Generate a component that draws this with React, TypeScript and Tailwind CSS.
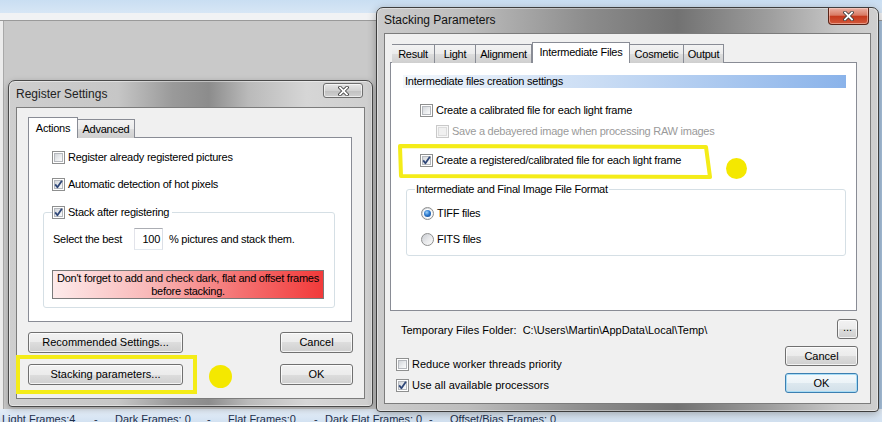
import React from "react";

const MS = "font-['Liberation_Sans',Arial,sans-serif] text-[11px] leading-[13px] tracking-[-0.25px]";
const SEG = "font-['Liberation_Sans',Arial,sans-serif] text-[11px] leading-[13px]";
const TITLE = "font-['Liberation_Sans',Arial,sans-serif] text-[12px] leading-[15px]";

function Check({ checked = false, disabled = false }: { checked?: boolean; disabled?: boolean }) {
  return (
    <span
      className={`flex h-[13px] w-[13px] shrink-0 items-center justify-center border ${
        disabled ? "border-[#c9c9c9] bg-[#f7f7f7]" : "border-[#8e8f8f] bg-white"
      }`}
    >
      <span
        className={`relative block h-[9px] w-[9px] border ${
          disabled
            ? "border-[#dcdcdc] bg-[#f0f0f0]"
            : "border-[#b5b8bd] bg-[linear-gradient(135deg,#d3d6da_0%,#eceef0_60%,#fbfbfb_100%)]"
        }`}
      >
        {checked && (
          <svg className="absolute -left-[2px] -top-[2px]" width="11" height="11" viewBox="0 0 11 11">
            <path d="M2.2 5.4 L4.4 8.2 L8.9 1.8" fill="none" stroke="#2f4778" strokeWidth="1.8" strokeLinejoin="round" />
          </svg>
        )}
      </span>
    </span>
  );
}

function Radio({ checked = false }: { checked?: boolean }) {
  return (
    <span className="flex h-[13px] w-[13px] shrink-0 items-center justify-center rounded-full border border-[#8e8f8f] bg-[linear-gradient(135deg,#c9ccd1_0%,#e9eaec_55%,#fbfbfb_100%)]">
      {checked && (
        <span className="flex h-[9px] w-[9px] items-center justify-center rounded-full bg-white">
          <span className="block h-[7px] w-[7px] rounded-full bg-[radial-gradient(circle_at_40%_35%,#9fd3fb_0%,#2e7bd0_45%,#0f3d7e_100%)]" />
        </span>
      )}
    </span>
  );
}

function Btn({
  children,
  className = "",
  focused = false,
}: {
  children: React.ReactNode;
  className?: string;
  focused?: boolean;
}) {
  return (
    <div
      className={`flex shrink-0 items-center justify-center rounded-[3px] border ${
        focused
          ? "border-[#3c7fb1] bg-[linear-gradient(180deg,#f4f9fc_0%,#ecf3f7_50%,#dde8ef_50%,#d2e0e9_100%)] shadow-[inset_0_0_0_1px_#a8dcf5]"
          : "border-[#707070] bg-[linear-gradient(180deg,#f2f2f2_0%,#ebebeb_50%,#dddddd_50%,#cfcfcf_100%)] shadow-[inset_0_0_0_1px_rgba(255,255,255,0.75)]"
      } ${SEG} text-black ${className}`}
    >
      {children}
    </div>
  );
}

function CloseX() {
  return (
    <svg width="11" height="10" viewBox="0 0 11 10">
      <path d="M2 1.5 L9 8.5 M9 1.5 L2 8.5" stroke="#3b3b3b" strokeWidth="3.4" strokeLinecap="square" />
      <path d="M2 1.5 L9 8.5 M9 1.5 L2 8.5" stroke="#ffffff" strokeWidth="1.8" strokeLinecap="square" />
    </svg>
  );
}

function Row({ children, className = "" }: { children: React.ReactNode; className?: string }) {
  return <div className={`flex items-center ${className}`}>{children}</div>;
}

const TAB_OFF =
  "flex h-[19px] items-start justify-center border border-b-0 border-l-0 border-[#898c95] bg-[linear-gradient(180deg,#f3f3f3_0%,#ebebeb_50%,#dddddd_51%,#cfcfcf_100%)] pt-[3px]";

export default function App() {
  return (
    <div className="relative h-[422px] w-[882px] overflow-hidden bg-[#c9c9c9]">
      {/* desktop / main app background */}
      <div className="flex h-full flex-col">
        <div className="h-[13px] bg-[linear-gradient(180deg,#c9def2_0%,#d7e6f5_100%)]" />
        <div className="h-[8px] border-b border-[#9a9a9a] bg-[#f1f2f4]" />
        <div className="flex flex-1">
          <div className="w-[4px] border-r border-[#a9a9a9] bg-[#ececec]" />
          <div className="flex-1 bg-[#c9c9c9]" />
          <div className="w-[3px] bg-[#a9c3de]" />
        </div>
        <div className="flex h-[13px] items-start bg-[linear-gradient(180deg,#e4edf7_0%,#d3e2f2_100%)] pl-[2px] pt-[4px] font-['Liberation_Sans',Arial,sans-serif] text-[11px] leading-[13px] text-[#1d2f4b]">
          <span className="w-[92px] shrink-0">Light Frames:4</span>
          <span className="w-[21px] shrink-0">-</span>
          <span className="w-[92px] shrink-0">Dark Frames: 0</span>
          <span className="w-[21px] shrink-0">-</span>
          <span className="w-[86px] shrink-0">Flat Frames:0</span>
          <span className="w-[11px] shrink-0">-</span>
          <span className="w-[104px] shrink-0">Dark Flat Frames: 0</span>
          <span className="w-[21px] shrink-0">-</span>
          <span className="shrink-0">Offset/Bias Frames: 0</span>
        </div>
      </div>

      {/* Register Settings window */}
      <div className="absolute left-[8px] top-[80px] flex h-[327px] w-[365px] flex-col rounded-t-[7px] rounded-b-[4px] border border-[#4a4a4a] bg-[linear-gradient(90deg,#cfcfcf_0%,#c6c6c6_30%,#9a9a9a_45%,#8c8c8c_55%,#bababa_66%,#d6d6d6_82%,#cecece_100%)] px-[7px] pb-[7px] shadow-[inset_0_0_0_1px_rgba(255,255,255,0.45),0_2px_6px_rgba(0,0,0,0.25)]">
        <div className="flex h-[26px] shrink-0 items-start justify-between">
          <span className={`${TITLE} mt-[6px] text-[#222]`}>Register Settings</span>
          <div className="mr-[2px] mt-[2px] flex h-[15px] w-[40px] items-center justify-center rounded-[3px] border border-[#6e6e6e] bg-[linear-gradient(180deg,#e6e6e6_0%,#d2d2d2_50%,#c0c0c0_51%,#d0d0d0_100%)] shadow-[inset_0_0_0_1px_rgba(255,255,255,0.6)]">
            <CloseX />
          </div>
        </div>
        <div className="flex flex-1 flex-col border border-[#7c7c7c] bg-[#f0f0f0]">
          {/* tab control */}
          <div className="ml-[11px] mt-[9px] w-[324px]">
            <div className={`flex h-[21px] items-end ${MS}`}>
              <div className="relative z-10 flex h-[21px] w-[50px] items-start justify-center border border-b-0 border-[#898c95] bg-white pt-[4px]">
                Actions
              </div>
              <div className={`${TAB_OFF} h-[18px] w-[57px]`}>Advanced</div>
            </div>
            <div className={`-mt-px flex h-[185px] flex-col border border-[#898c95] bg-white ${MS}`}>
              <Row className="ml-[23px] mt-[13px] gap-[3px]">
                <Check />
                <span>Register already registered pictures</span>
              </Row>
              <Row className="ml-[23px] mt-[14px] gap-[3px]">
                <Check checked />
                <span>Automatic detection of hot pixels</span>
              </Row>
              <div className="ml-[14px] mt-[21px] flex h-[96px] w-[292px] flex-col rounded-[3px] border border-[#d5dfe5]">
                <Row className="-mt-[7px] ml-[8px] w-fit gap-[3px] bg-white pr-[3px]">
                  <Check checked />
                  <span>Stack after registering</span>
                </Row>
                <Row className="ml-[9px] mt-[9px]">
                  <span className="w-[81px] shrink-0">Select the best</span>
                  <div className="flex h-[22px] w-[29px] shrink-0 items-center justify-end border border-[#abadb3] border-b-[#e3e9ef] border-l-[#e2e3ea] border-r-[#dbdfe6] bg-white pr-[2px]">
                    100
                  </div>
                  <span className="ml-[6px]">% pictures and stack them.</span>
                </Row>
                <div className="ml-[8px] mt-[20px] flex h-[29px] w-[272px] flex-col items-center justify-center whitespace-nowrap border border-[#7a7a7a] bg-[linear-gradient(90deg,#fdeaea_0%,#f9b9b9_35%,#f47070_70%,#f23a3a_100%)] text-black">
                  <span>Don't forget to add and check dark, flat and offset frames</span>
                  <span>before stacking.</span>
                </div>
              </div>
            </div>
          </div>
          {/* buttons */}
          <div className="ml-[11px] mr-[11px] mt-[10px] flex justify-between">
            <Btn className="h-[21px] w-[155px]">Recommended Settings...</Btn>
            <Btn className="h-[21px] w-[73px]">Cancel</Btn>
          </div>
          <div className="ml-[11px] mr-[11px] mt-[11px] flex justify-between">
            <Btn className="h-[21px] w-[155px]">Stacking parameters...</Btn>
            <Btn className="h-[21px] w-[73px]">OK</Btn>
          </div>
        </div>
      </div>

      {/* Stacking Parameters window */}
      <div className="absolute left-[376px] top-[7px] flex h-[405px] w-[503px] flex-col rounded-t-[7px] rounded-b-[4px] border border-[#3e3e3e] bg-[linear-gradient(90deg,#cbcbcb_0%,#bdbdbd_18%,#8c8c8c_42%,#727272_60%,#9d9d9d_78%,#c6c6c6_92%,#cfcfcf_100%)] px-[7px] pb-[7px] shadow-[inset_0_0_0_1px_rgba(255,255,255,0.4),0_2px_8px_rgba(0,0,0,0.3)]">
        <div className="flex h-[25px] shrink-0 items-start justify-between">
          <span className={`${TITLE} mt-[5px] text-[#111]`}>Stacking Parameters</span>
          <div className="mr-[2px] flex h-[17px] w-[41px] items-center justify-center rounded-b-[4px] border border-t-0 border-[#5a2418] bg-[linear-gradient(180deg,#eab0a3_0%,#d97a64_45%,#c5391d_52%,#d2583b_100%)] shadow-[inset_0_0_0_1px_rgba(255,220,210,0.5)]">
            <CloseX />
          </div>
        </div>
        <div className="flex flex-1 flex-col border border-[#7c7c7c] bg-[#f0f0f0]">
          <div className="ml-[5px] mt-[8px] w-[467px]">
            <div className={`flex h-[21px] items-end pl-[2px] ${MS}`}>
              <div className={`${TAB_OFF} w-[43px] border-l`}>Result</div>
              <div className={`${TAB_OFF} w-[41px]`}>Light</div>
              <div className={`${TAB_OFF} w-[56px]`}>Alignment</div>
              <div className="relative z-10 flex h-[21px] w-[98px] items-start justify-center border border-b-0 border-[#898c95] bg-white pt-[3px]">
                Intermediate Files
              </div>
              <div className={`${TAB_OFF} w-[54px]`}>Cosmetic</div>
              <div className={`${TAB_OFF} w-[40px]`}>Output</div>
            </div>
            <div className={`-mt-px flex h-[249px] flex-col border border-[#898c95] bg-white ${MS}`}>
              <div className="ml-[12px] mt-[12px] flex h-[13px] w-[443px] items-center bg-[linear-gradient(90deg,#f3f7fc_0%,#c9dcf4_45%,#8ab3ea_100%)] pl-[2px]">
                Intermediate files creation settings
              </div>
              <Row className="ml-[29px] mt-[16px] gap-[3px]">
                <Check />
                <span>Create a calibrated file for each light frame</span>
              </Row>
              <Row className="ml-[45px] mt-[8px] gap-[3px] text-[#9a9a9a]">
                <Check disabled />
                <span>Save a debayered image when processing RAW images</span>
              </Row>
              <Row className="ml-[29px] mt-[16px] gap-[3px]">
                <Check checked />
                <span>Create a registered/calibrated file for each light frame</span>
              </Row>
              <div className="ml-[15px] mt-[22px] flex h-[67px] w-[440px] flex-col rounded-[3px] border border-[#d5dfe5]">
                <span className="-mt-[7px] ml-[8px] w-fit bg-white px-[1px]">Intermediate and Final Image File Format</span>
                <Row className="ml-[14px] mt-[11px] gap-[3px]">
                  <Radio checked />
                  <span>TIFF files</span>
                </Row>
                <Row className="ml-[14px] mt-[13px] gap-[3px]">
                  <Radio />
                  <span>FITS files</span>
                </Row>
              </div>
            </div>
          </div>
          <div className="ml-[16px] mr-[12px] mt-[8px] flex h-[20px] items-center justify-between">
            <span className={`${SEG} mt-[3px]`}>Temporary Files Folder:&nbsp; C:\Users\Martin\AppData\Local\Temp\</span>
            <Btn className="h-[20px] w-[21px] pb-[3px]">...</Btn>
          </div>
          <div className="ml-[11px] mr-[12px] mt-[7px] flex items-end justify-between">
            <div className={`flex flex-col gap-[8px] pb-[1px] ${SEG}`}>
              <Row className="gap-[3px]">
                <Check />
                <span>Reduce worker threads priority</span>
              </Row>
              <Row className="gap-[3px]">
                <Check checked />
                <span>Use all available processors</span>
              </Row>
            </div>
            <div className="flex flex-col gap-[7px]">
              <Btn className="h-[20px] w-[73px]">Cancel</Btn>
              <Btn className="h-[20px] w-[73px]" focused>
                OK
              </Btn>
            </div>
          </div>
        </div>
      </div>

      {/* yellow annotations */}
      <div className="absolute left-[16px] top-[355px] h-[39px] w-[181px] border-[4px] border-[#f4ec18]" />
      <div className="absolute left-[209px] top-[365px] h-[23px] w-[23px] rounded-full bg-[#f4e800]" />
      <svg className="absolute left-0 top-0" width="882" height="422" viewBox="0 0 882 422">
        <path
          d="M400 146 L706 147 L710 177 L401 176 Z"
          fill="none"
          stroke="#f4ec18"
          strokeWidth="4"
          strokeLinejoin="round"
        />
      </svg>
      <div className="absolute left-[726px] top-[158px] h-[21px] w-[21px] rounded-full bg-[#f4e800]" />
    </div>
  );
}
